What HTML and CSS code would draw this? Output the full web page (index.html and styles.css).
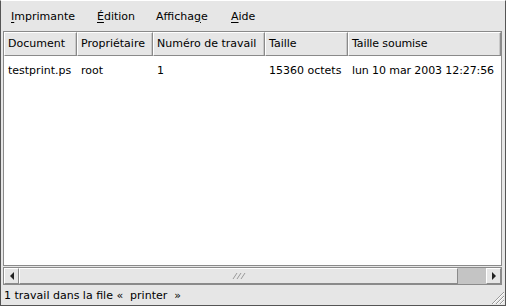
FILE: index.html
```html
<!DOCTYPE html>
<html lang="fr">
<head>
  <meta charset="UTF-8">
  <title>Impression</title>
  <link rel="stylesheet" href="styles.css">
</head>
<body>
  <div class="window">
    <div class="menubar">
      <span class="menu m-print"><u>I</u>mprimante</span>
      <span class="menu m-edit"><u>É</u>dition</span>
      <span class="menu m-view">Afficha<u>g</u>e</span>
      <span class="menu"><u>A</u>ide</span>
    </div>

    <div class="list">
      <div class="row header">
        <div class="cell c-doc">Document</div>
        <div class="cell c-owner">Propriétaire</div>
        <div class="cell c-num">Numéro de travail</div>
        <div class="cell c-size">Taille</div>
        <div class="cell c-date">Taille soumise</div>
      </div>
      <div class="rows">
        <div class="row">
          <div class="cell c-doc">testprint.ps</div>
          <div class="cell c-owner">root</div>
          <div class="cell c-num">1</div>
          <div class="cell c-size">15360 octets</div>
          <div class="cell c-date">lun 10 mar 2003 12:27:56</div>
        </div>
      </div>
    </div>

    <div class="hscroll">
      <div class="arrow">
        <svg width="6" height="8" viewBox="0 0 6 8"><path d="M5 0 L1 4 L5 8 Z" fill="#222"/></svg>
      </div>
      <div class="thumb">
        <svg width="14" height="8" viewBox="0 0 14 8">
          <path d="M1 7 L5 1 M5 7 L9 1 M9 7 L13 1" stroke="#999" stroke-width="1"/>
        </svg>
      </div>
      <div class="trough"></div>
      <div class="arrow">
        <svg width="6" height="8" viewBox="0 0 6 8"><path d="M1 0 L5 4 L1 8 Z" fill="#222"/></svg>
      </div>
    </div>

    <div class="statusbar">
      <span>1 travail dans la file «&nbsp; printer &nbsp;»</span>
      <svg class="grip" width="16" height="16" viewBox="0 0 16 16">
        <path d="M15 3 L3 15 M15 7 L7 15 M15 11 L11 15" stroke="#999" stroke-width="1"/>
        <path d="M15 4 L4 15 M15 8 L8 15 M15 12 L12 15" stroke="#fff" stroke-width="1"/>
      </svg>
    </div>
  </div>
</body>
</html>
```

FILE: styles.css
```css
body {
  margin: 0;
  font-family: "DejaVu Sans", sans-serif;
  font-size: 11px;
  color: #000;
}
.window {
  width: 506px;
  height: 306px;
  box-sizing: border-box;
  background: #e6e6e6;
  border-top: 1px solid #fff;
  border-left: 1px solid #555;
  border-right: 1px solid #555;
  border-bottom: 1px solid #555;
  display: flex;
  flex-direction: column;
}
.menubar {
  height: 30px;
  display: flex;
  align-items: center;
  padding-left: 10px;
  white-space: nowrap;
}
.menu { flex: none; }
.m-print { width: 86px; }
.m-edit { width: 59px; }
.m-view { width: 75px; }
.menu u {
  text-decoration-thickness: 1px;
  text-underline-offset: 2px;
}
.list {
  margin: 0 3px 0 2px;
  height: 233px;
  border: 1px solid #8a8a8a;
  background: #fff;
  display: flex;
  flex-direction: column;
  overflow: hidden;
}
.row {
  display: flex;
  white-space: nowrap;
}
.cell {
  box-sizing: border-box;
  flex: none;
  padding-left: 3px;
}
.header .cell {
  height: 24px;
  line-height: 22px;
  background: #e6e6e6;
  border-top: 1px solid #fff;
  border-left: 1px solid #fff;
  border-right: 1px solid #8a8a8a;
  border-bottom: 1px solid #8a8a8a;
  box-shadow: inset -1px 0 0 #c8c8c8;
}
.rows .cell {
  padding-top: 8px;
  padding-left: 4px;
}
.c-doc { width: 73px; }
.c-owner { width: 76px; }
.c-num { width: 112px; }
.c-size { width: 83px; }
.c-date { flex: 1; letter-spacing: -0.1px; }
.hscroll {
  margin: 1px 3px 0 2px;
  height: 18px;
  box-sizing: border-box;
  border: 1px solid #8a8a8a;
  background: #c4c4c4;
  display: flex;
}
.arrow {
  width: 15px;
  box-sizing: border-box;
  background: #e6e6e6;
  border-top: 1px solid #fff;
  border-left: 1px solid #fff;
  border-right: 1px solid #8a8a8a;
  border-bottom: 1px solid #8a8a8a;
  display: flex;
  align-items: center;
  justify-content: center;
}
.thumb {
  width: 439px;
  box-sizing: border-box;
  background: #e6e6e6;
  border-top: 1px solid #fff;
  border-left: 1px solid #fff;
  border-right: 1px solid #8a8a8a;
  border-bottom: 1px solid #8a8a8a;
  display: flex;
  align-items: center;
  justify-content: center;
}
.trough { flex: 1; }
.statusbar {
  flex: 1;
  display: flex;
  align-items: center;
  padding-left: 3px;
  position: relative;
}
.grip {
  position: absolute;
  right: 0;
  bottom: 0;
}
```
